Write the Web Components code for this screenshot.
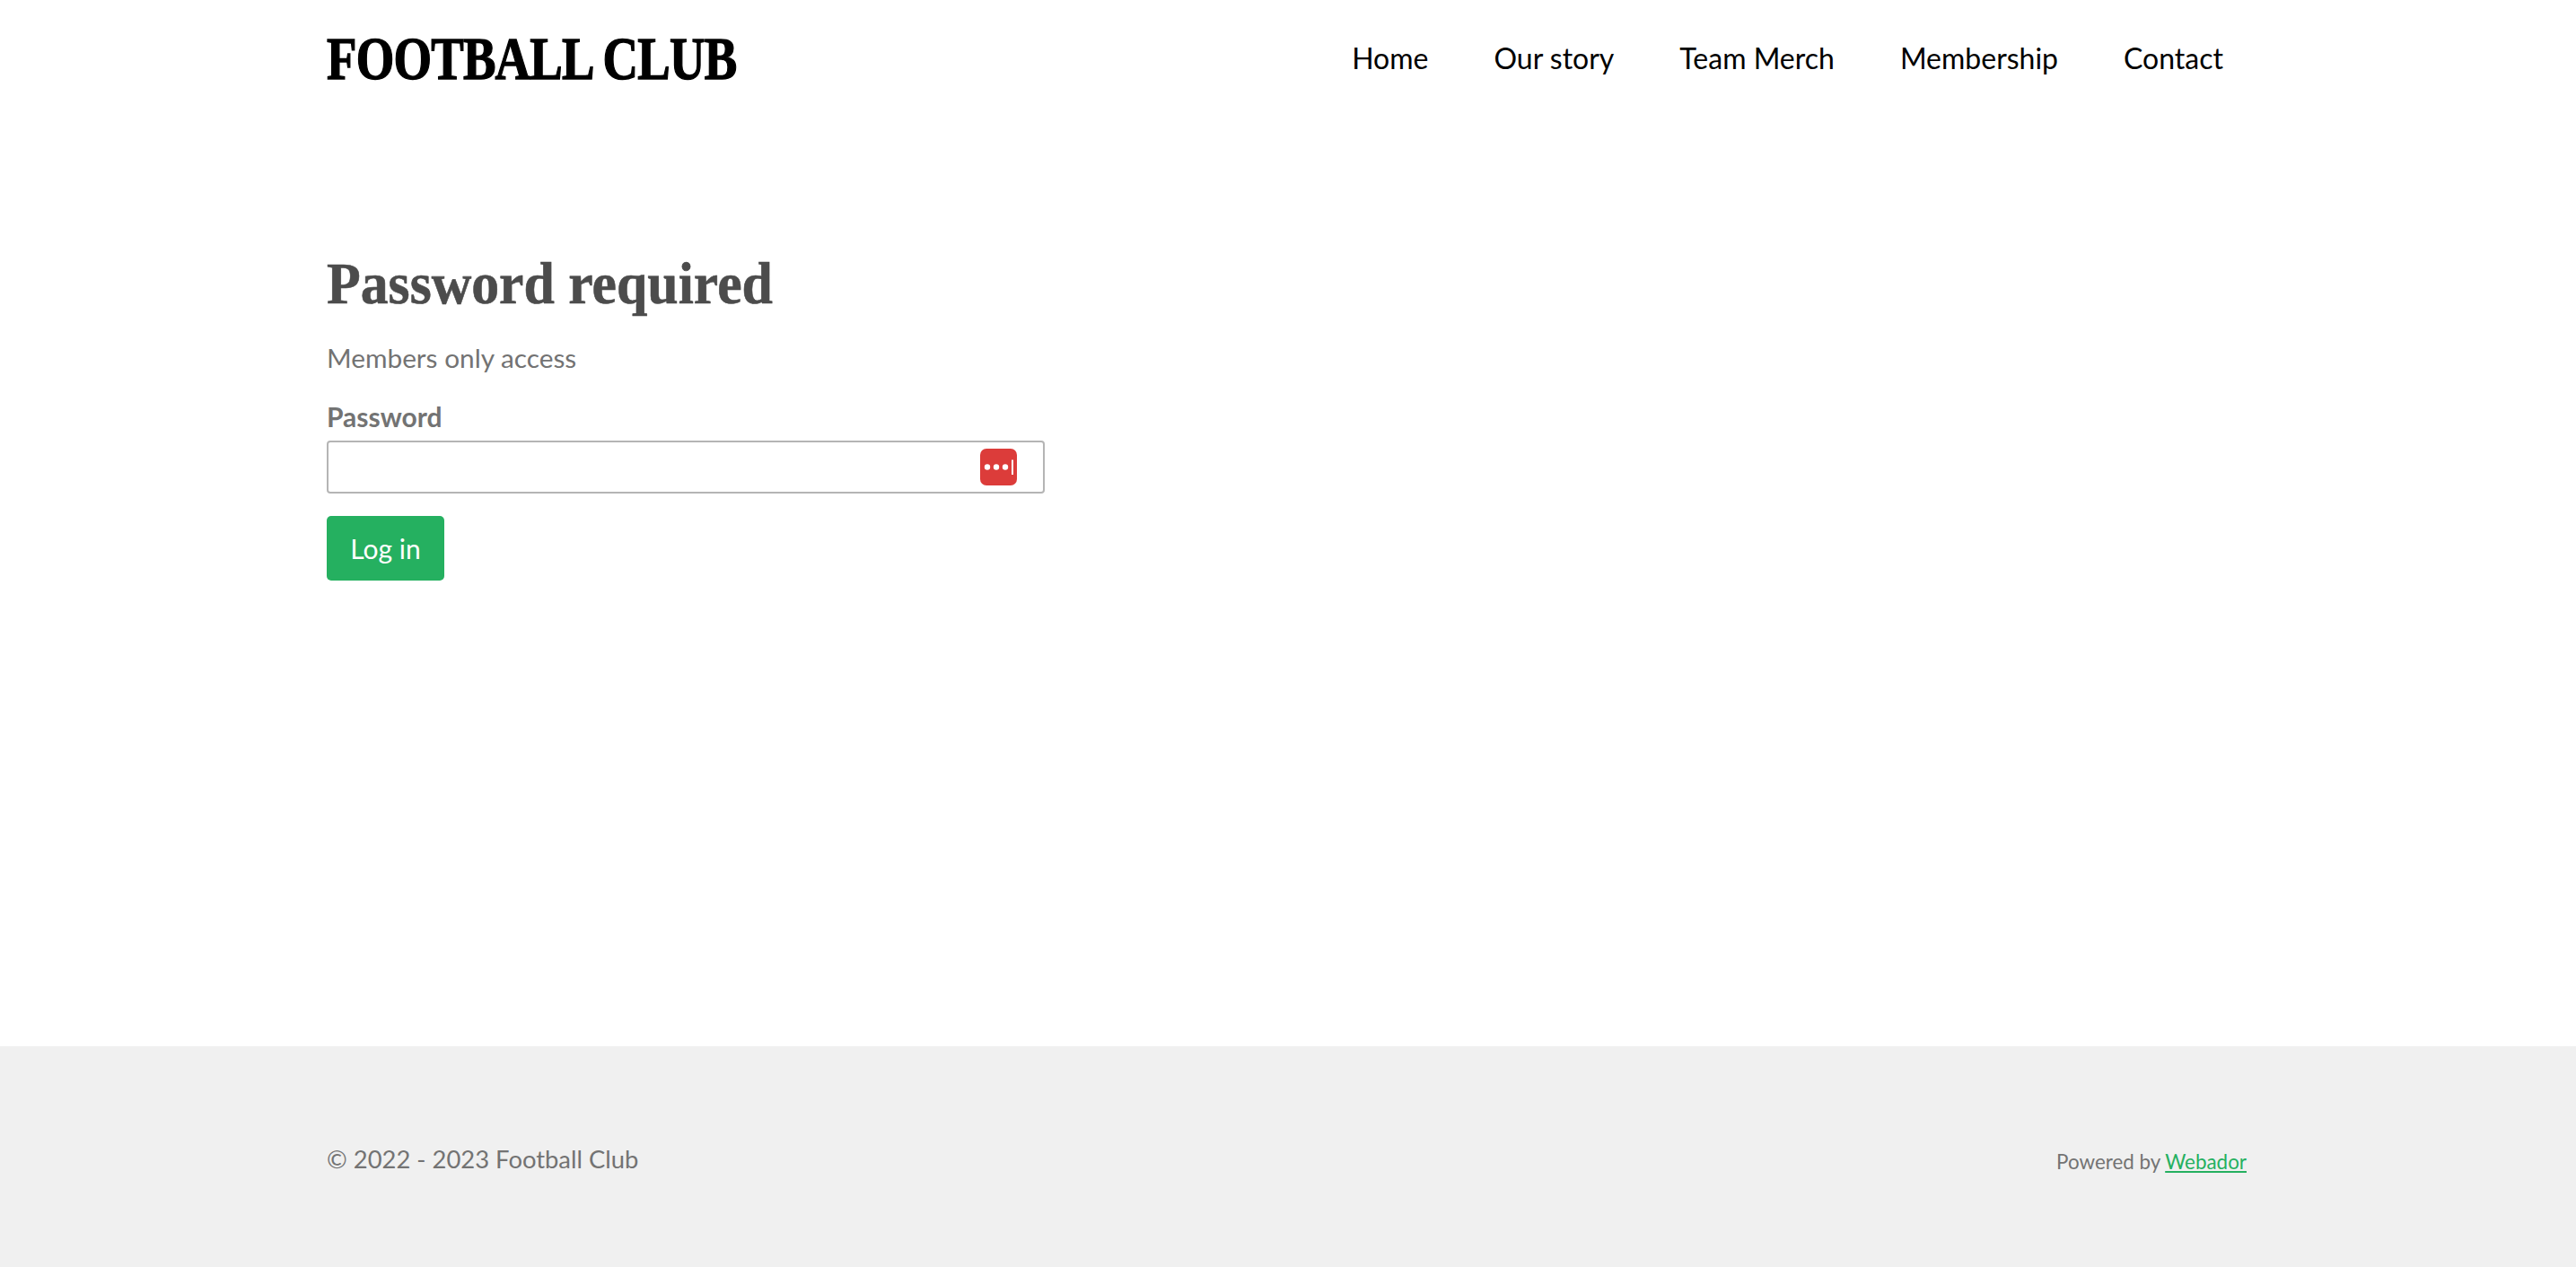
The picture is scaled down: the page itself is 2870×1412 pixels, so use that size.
<!DOCTYPE html>
<html lang="en">
<head>
<meta charset="utf-8">
<title>Football Club</title>
<style>
  html, body { margin: 0; height: 100%; background: #fff; }
  body { font-family: Lato, "Open Sans", sans-serif; }
  fc-page { height: 1412px; }
</style>
</head>
<body>
<fc-page>
  <fc-header slot="header" brand="FOOTBALL CLUB">
    <fc-nav-link>Home</fc-nav-link>
    <fc-nav-link>Our story</fc-nav-link>
    <fc-nav-link>Team Merch</fc-nav-link>
    <fc-nav-link>Membership</fc-nav-link>
    <fc-nav-link>Contact</fc-nav-link>
  </fc-header>
  <fc-login></fc-login>
  <fc-footer slot="footer"></fc-footer>
</fc-page>

<script>
class FcPage extends HTMLElement {
  connectedCallback() {
    this.attachShadow({ mode: 'open' });
    this.shadowRoot.innerHTML = `
      <style>
        :host { display: flex; flex-direction: column; }
        main { flex: 1; }
      </style>
      <slot name="header"></slot>
      <main><slot></slot></main>
      <slot name="footer"></slot>
    `;
  }
}

class FcHeader extends HTMLElement {
  connectedCallback() {
    this.attachShadow({ mode: 'open' });
    this.shadowRoot.innerHTML = `
      <style>
        :host {
          display: flex;
          justify-content: space-between;
          align-items: center;
          height: 130px;
          padding: 0 393px 0 364px;
        }
        /* the logo face is a narrow display serif, squeeze the closest one we have */
        .brand {
          font: bold 68px/1 "Liberation Serif", serif;
          color: #000;
          letter-spacing: -1px;
          white-space: nowrap;
          -webkit-text-stroke: 1.4px #000;
          transform: scaleX(.805);
          transform-origin: left center;
        }
        nav { display: flex; gap: 73px; }
      </style>
      <div class="brand">${this.getAttribute('brand')}</div>
      <nav><slot></slot></nav>
    `;
  }
}

class FcNavLink extends HTMLElement {
  connectedCallback() {
    this.attachShadow({ mode: 'open' });
    this.shadowRoot.innerHTML = `
      <style>
        :host { display: block; font: 32px/1.4 Lato, sans-serif; color: #000; white-space: nowrap; }
      </style>
      <slot></slot>
    `;
  }
}

class FcLogin extends HTMLElement {
  connectedCallback() {
    this.attachShadow({ mode: 'open' });
    this.shadowRoot.innerHTML = `
      <style>
        :host { display: block; padding: 150px 0 0 364px; color: #737373; }
        h1 {
          margin: 0 0 26px;
          font: bold 65px/72px "Liberation Serif", serif;
          color: #4c4c4c;
          white-space: nowrap;
          -webkit-text-stroke: .6px #4c4c4c;
          transform: scaleX(.95);
          transform-origin: left center;
        }
        p { margin: 0 0 25px; font: 29.8px/42px Lato, sans-serif; }
        label { display: block; font: bold 30px/39px Lato, sans-serif; margin-bottom: 7px; }
        fc-password-input { margin-bottom: 25px; }
        button {
          display: block;
          width: 131px;
          height: 72px;
          border: 0;
          border-radius: 5px;
          background: #25b060;
          color: #fff;
          font: 30px Lato, sans-serif;
          padding: 0;
        }
      </style>
      <h1>Password required</h1>
      <p>Members only access</p>
      <label>Password</label>
      <fc-password-input></fc-password-input>
      <button>Log in</button>
    `;
  }
}

class FcPasswordInput extends HTMLElement {
  connectedCallback() {
    this.attachShadow({ mode: 'open' });
    this.shadowRoot.innerHTML = `
      <style>
        :host {
          display: flex;
          justify-content: flex-end;
          align-items: center;
          box-sizing: border-box;
          width: 800px;
          height: 59px;
          padding-right: 29px;
          border: 2px solid #b5b5b5;
          border-radius: 4px;
          background: #fff;
        }
        svg { display: block; }
      </style>
      <svg width="41" height="41" viewBox="0 0 41 41">
        <rect width="41" height="41" rx="7" fill="#dc3c3a"/>
        <circle cx="8" cy="20.5" r="3.2" fill="#fff"/>
        <circle cx="18" cy="20.5" r="3.2" fill="#fff"/>
        <circle cx="28" cy="20.5" r="3.2" fill="#fff"/>
        <rect x="35" y="12.5" width="2" height="16.5" fill="#fff"/>
      </svg>
    `;
  }
}

class FcFooter extends HTMLElement {
  connectedCallback() {
    this.attachShadow({ mode: 'open' });
    this.shadowRoot.innerHTML = `
      <style>
        :host {
          display: flex;
          justify-content: space-between;
          align-items: center;
          box-sizing: border-box;
          height: 246px;
          padding: 6px 367px 0 364px;
          background: #f0f0f0;
          color: #737373;
        }
        .copy { font: 27.4px/38px Lato, sans-serif; }
        .powered { font: 22.4px/38px Lato, sans-serif; padding-top: 5px; }
        a { color: #25b060; text-decoration: underline; }
      </style>
      <div class="copy">© 2022 - 2023 Football Club</div>
      <div class="powered">Powered by <a href="#">Webador</a></div>
    `;
  }
}

customElements.define('fc-page', FcPage);
customElements.define('fc-header', FcHeader);
customElements.define('fc-nav-link', FcNavLink);
customElements.define('fc-login', FcLogin);
customElements.define('fc-password-input', FcPasswordInput);
customElements.define('fc-footer', FcFooter);
</script>
</body>
</html>
